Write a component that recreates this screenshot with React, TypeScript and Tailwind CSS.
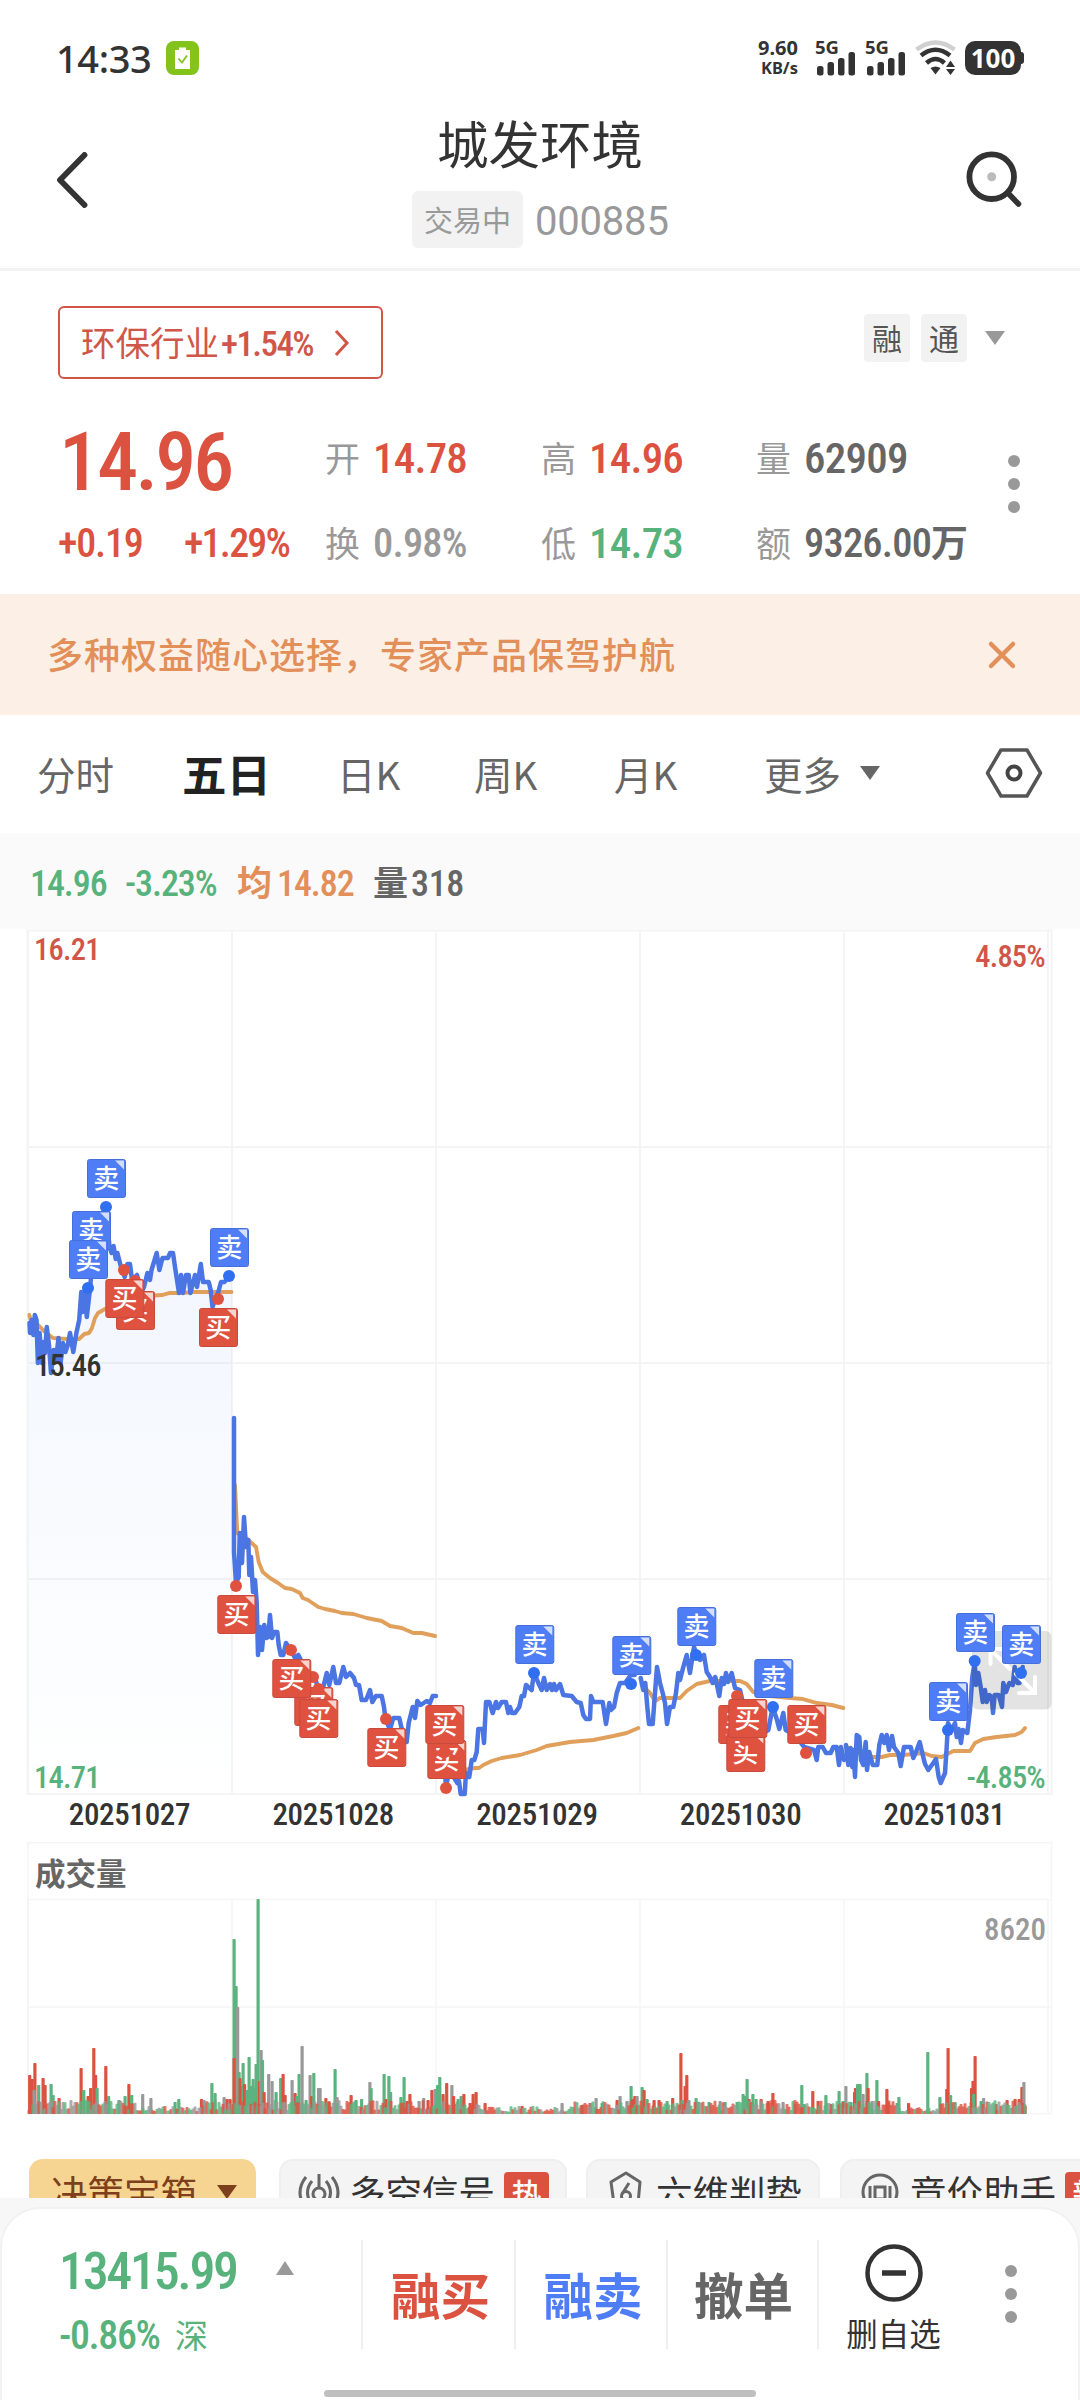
import React from 'react';
import clsx from 'clsx';

type Point = [number, number];
type Side = 'buy' | 'sell';

interface TradeMark {
  side: Side;
  box?: Point;
  dot?: Point;
}

const NUM = "font-['Roboto_Condensed','Noto_Sans_CJK_SC',sans-serif]";

// x,y pairs on the 1080 wide chart canvas, one entry per trading day
const PRICE_DAYS = [
  '29.5,1323 30,1333 31.7,1320 33.4,1335 34.8,1315 36.5,1320 37.9,1363 39.6,1333 42,1363 43.7,1342 45,1353 46.8,1327 49,1345 51,1373 53.7,1350 56,1360 58.5,1338 60.6,1363 63,1343 65.4,1352 67.8,1345 70,1333 73.3,1352 76.4,1333 79.2,1320 81.3,1292 82.6,1312 84.7,1293 86.8,1317 90.2,1287 93,1253 97,1233 102,1215 105.7,1207 109.5,1247 111.6,1253 113.6,1246 115.7,1259 117.4,1253 121,1267 124.7,1277 127.4,1264 130,1264 132,1280 137,1275 141,1293 144,1287 147.4,1273 150,1280 151.5,1270 156.7,1253 159.4,1270 162.5,1258 168,1258 170,1253 173,1253 175,1267 177,1280 179,1293 181,1275 183,1293 186,1275 188.7,1275 190.4,1293 193,1283 195,1275 197,1287 199,1275 200.8,1264 203,1282 208.7,1282 210.7,1290 212.5,1307 215,1300 218,1293 221,1282 224.5,1282 229,1276',
  '234,1418 234,1552 236,1583 238.7,1577 239.7,1533 242,1563 244,1517 246,1547 248.3,1540 249.3,1575 251,1557 253,1592 255,1580 256.7,1603 258,1655 260,1627 262,1650 264.3,1625 266.3,1638 268.3,1637 270,1615 272,1638 274,1632 277.3,1632 278.7,1645 280.7,1655 283.3,1655 286,1643 290.7,1650 295,1658 298.3,1655 306,1670 315,1677 318.3,1690 323.3,1687 326.7,1673 329.3,1685 333.3,1667 336,1683 339.3,1683 343.3,1667 346,1677 350,1673 354,1678 356,1685 359,1685 361.7,1700 366,1700 370,1690 372.3,1702 376,1696 381.7,1696 384,1707 385.3,1718 390,1730 393.3,1718 399.3,1718 401.3,1727 406.7,1742 408.7,1723 412.7,1707 415,1718 417.3,1701 420.7,1705 426.7,1701 430,1703 432.7,1696 436,1696',
  '438,1718 441,1742 444,1752 446,1788 450,1765 453,1776 457.3,1783 459,1781 460.7,1794 464.7,1794 466,1773 469.3,1777 471.7,1760 474.3,1760 476.7,1752 478.3,1729 482.7,1729 484,1743 486,1702 489.3,1702 492.7,1713 496,1702 498,1708 501.7,1702 506,1702 508.3,1713 510,1707 512,1713 515,1713 519.3,1707 521.7,1696 524,1696 526,1685 531.7,1690 534,1672 538.3,1683 541.7,1690 544,1678 546.7,1690 550,1684 552,1690 554,1684 556,1690 560,1684 563.3,1695 571.7,1696 576.7,1702 580.7,1703 583.3,1715 586,1719 590,1719 591,1696 593.3,1702 602.7,1702 606,1724 609.3,1703 611,1710 614,1707 616.7,1693 620,1683 625,1683 630.7,1675 634.7,1675',
  '640.7,1678 643.3,1690 645.3,1683 647.3,1707 649,1724 652.7,1724 655,1693 657,1667 660,1683 662.7,1693 665,1703 667,1724 670,1707 673.3,1707 676,1693 678.3,1673 680,1680 683.3,1667 686.7,1655 690,1673 692.7,1655 694,1647 696.7,1655 700,1660 704,1655 706.7,1672 710,1677 712.7,1683 715.3,1677 719.3,1696 721.7,1678 724,1684 726,1673 728,1682 731.7,1673 735,1688 740,1690 745,1712 752,1725 760,1735 768.3,1730 772.7,1707 776.7,1719 779.3,1729 783.3,1713 785.7,1730 795,1735 804,1747 814,1750 816.7,1760 818.3,1747 822.7,1747 826,1753 830.7,1753 833.3,1747 836.7,1747 839,1765 841,1747 844,1760',
  '846,1745 848.3,1765 850.7,1748 852.3,1767 853.5,1750 855,1777 856.7,1735 859.3,1737 861,1760 863.3,1765 865.7,1742 867,1770 869.3,1752 872.7,1765 877.3,1765 879.3,1745 881.7,1735 884.3,1743 886.7,1735 889,1750 892,1736 894,1747 898.3,1753 900.7,1766 904,1747 910.7,1747 913.3,1758 916,1752 919.7,1742 922,1752 925,1764 928.3,1770 933.3,1763 936,1759 938.7,1777 940.7,1783 945,1773 946.7,1747 948,1723 951,1730 955,1723 956.7,1737 958.7,1729 961,1743 962.7,1730 967.3,1733 970,1710 972.3,1677 974.7,1662 976,1685 978.3,1673 980.7,1687 982.7,1702 985,1690 986.7,1702 989.3,1695 991.7,1697 993,1713 994.7,1695 998.7,1695 1002,1707 1003.3,1683 1006,1692 1009.3,1683 1012.7,1685 1014.7,1667 1017.3,1683 1019.5,1683 1022.7,1667',
];

const AVERAGE_DAYS = [
  '29.3,1315 31,1321 38,1325 45,1332 53,1338 67,1339 79,1339 84.4,1334 89,1333 92,1328 95,1318 98,1313 105,1309 125,1300 146,1296 162,1295 169,1293 182.5,1293 193,1292 231.5,1292',
  '235,1485 237.3,1533 248.3,1540 256,1547 258.7,1562 262.7,1572 270,1578 278,1583 285,1588 291.7,1589 300,1593 302.7,1598 308,1600 318.3,1607 325,1609 335,1611 341.7,1613 353.3,1614 366.7,1618 381.7,1621 390,1626 401.7,1628 413.3,1633 421.7,1633 435,1636',
  '464,1770 475,1768 479,1768 483.3,1765 491.7,1761 501.7,1758 520,1755 536.7,1750 546.7,1746 570,1742 593.3,1740 613.3,1736 626.7,1733 638.3,1728',
  '641.7,1685 650,1693 655,1701 660,1698 680,1698 686.7,1691 696.7,1684 710,1681 740,1681 746.7,1684 753.3,1692 770,1696 790,1698 803,1699 817,1703 831.7,1705 843.3,1708',
  '846,1746 851.7,1750 873.3,1757 881.7,1757 890,1755 903.3,1755 923.3,1753 931.7,1756 941.7,1757 953.3,1751 970,1751 975,1743 983.3,1739 996.7,1737 1015,1735 1021.7,1732 1025,1728',
];

// painted in order, later entries cover earlier ones
const MARKS: TradeMark[] = [
  { side: 'sell', box: [87, 1159], dot: [106, 1207] },
  { side: 'sell', box: [72, 1211] },
  { side: 'sell', box: [69, 1240], dot: [88, 1288] },
  { side: 'buy', dot: [135, 1281] },
  { side: 'buy', box: [116, 1291] },
  { side: 'buy', box: [105.3, 1279], dot: [124, 1270] },
  { side: 'sell', box: [210, 1228], dot: [229, 1276] },
  { side: 'buy', box: [199, 1308], dot: [218, 1299] },
  { side: 'buy', box: [217.3, 1595], dot: [236, 1586] },
  { side: 'buy', box: [294.3, 1687], dot: [318.5, 1689] },
  { side: 'buy', box: [299.3, 1699], dot: [313, 1677] },
  { side: 'buy', box: [272.3, 1659], dot: [291, 1650] },
  { side: 'buy', box: [367.3, 1728], dot: [386, 1719] },
  { side: 'buy', box: [427.3, 1740], dot: [444.7, 1752] },
  { side: 'buy', box: [425.3, 1705], dot: [446, 1788] },
  { side: 'sell', box: [515.3, 1625], dot: [534, 1673] },
  { side: 'sell', box: [612.3, 1636], dot: [631, 1684] },
  { side: 'sell', box: [677.3, 1607], dot: [696, 1655] },
  { side: 'buy', box: [718.3, 1705] },
  { side: 'buy', box: [726.3, 1733], dot: [745, 1740] },
  { side: 'buy', dot: [753, 1743] },
  { side: 'buy', dot: [737, 1696] },
  { side: 'buy', box: [728.3, 1699] },
  { side: 'sell', box: [754.3, 1659], dot: [773, 1707] },
  { side: 'buy', box: [787.3, 1705], dot: [806, 1753] },
  { side: 'sell', box: [929, 1682], dot: [948, 1730] },
  { side: 'sell', box: [956, 1613], dot: [974.7, 1661] },
  { side: 'sell', box: [1002, 1625], dot: [1021, 1673] },
];

const BAR_COLORS: Record<string, string> = { r: '#dc5241', g: '#5cb37f', y: '#999999' };

// x, height, colour key
const VOLUME_PEAKS =
  '29.6 39 r,32 35 r,34.8 51 r,34 24 y,38.6 29 g,43 36 r,45 29 r,51 30 g,53 19 g,59 16 r,81 46 r,83.7 24 g,88 18 r,90.6 26 r,93.7 66 r,95.5 39 r,97 26 g,105.7 48 r,108.5 18 g,119 14 y,125 18 g,128.8 30 r,131.6 19 g,142.6 20 y,150.8 16 y,175 12 g,178.7 15 g,201.4 15 r,204 14 y,211.8 31 g,215 21 g,224 17 y,227 15 r,230 15 r,' +
  '234 175 g,236 128 g,237.6 107 y,234 56 r,239 42 g,240 36 r,241.5 28 r,243 51 g,244.5 30 r,247 24 g,249 57 g,251 28 g,253 35 g,254.5 26 g,256 50 g,258 215 g,259.5 33 r,261 64 y,262.4 54 g,264 22 r,268.6 40 y,272 33 y,276 22 g,280.6 36 g,283 40 r,285 19 r,292 34 y,295 21 r,297 18 g,299 40 g,302 68 y,306 14 g,310 39 y,311.5 18 r,313.7 41 g,318.5 26 y,320 26 y,325.8 16 r,329 12 r,335 45 g,337 17 y,351 19 r,356 14 g,361.5 15 g,369.8 32 y,371 26 g,384 40 g,386 15 r,388.8 38 g,390.5 22 g,400.8 17 g,404 37 g,407 13 r,409.8 20 r,419 13 y,423.6 16 y,428 14 r,431.8 24 r,435 25 y,' +
  '437.5 29 g,439.7 37 g,443 20 r,446.6 31 r,451.8 29 y,453.5 18 r,458 15 g,461 18 g,463.8 20 r,470 11 r,473 20 r,476 22 r,485 11 r,522 8 r,562 11 y,582 9 g,590 11 r,596 16 y,602 11 g,617 14 r,620 18 y,627 13 y,631 28 g,632.5 15 r,634.7 18 r,637 18 y,' +
  '642 27 g,644 24 r,647 15 g,654 14 r,659 14 r,667 13 g,672.6 16 r,680.8 61 r,682 14 g,685 28 r,686.7 39 r,688.5 14 g,696 16 g,698 12 y,709 12 g,720 13 y,725 12 g,737 12 g,743 20 g,745 18 g,747 35 g,749 15 r,752.8 20 g,756 15 g,761 15 r,768 13 r,772.8 21 r,783 12 y,795 10 y,801.7 29 g,804 10 g,812.7 23 r,818 13 r,825.8 19 g,831 10 r,839 23 g,' +
  '845.8 28 y,843 13 g,851 12 g,855.4 26 r,854.5 22 r,857.5 30 g,860 30 g,863 20 y,866.8 41 g,868 26 r,872 13 y,876.8 34 g,878.5 13 r,886.8 25 r,888 12 r,897 11 g,898.8 17 g,908.5 11 r,927.7 62 g,939.8 17 g,946.7 25 r,948 66 r,950.5 19 g,955 12 g,971.5 26 r,972.9 33 r,975 58 r,973.5 20 g,983.5 16 y,981 13 g,996 10 r,1007 14 r,1015 15 r,1019 15 r,1021.8 27 r,1023.8 32 y,1025 8 r';

const noise = (i: number) => {
  const s = Math.sin(i * 91.17) * 43758.5453;
  return s - Math.floor(s);
};

const BASE_BARS = Array.from({ length: 499 }, (_, i) => {
  const x = 29 + i * 2;
  const quiet = (x > 480 && x < 575) || (x > 135 && x < 200) || (x > 900 && x < 940);
  const key = noise(i + 7) < 0.4 ? 'r' : noise(i + 7) < 0.72 ? 'g' : 'y';
  return { x, h: (quiet ? 2 : 4) + noise(i) * (quiet ? 6 : 10), key };
});

const PEAK_BARS = VOLUME_PEAKS.split(',').map((entry) => {
  const [x, h, key] = entry.split(' ');
  return { x: Number(x), h: Number(h), key };
});

const DAY_LINES = [28, 232, 436, 640, 844, 1048];
const DATES = ['20251027', '20251028', '20251029', '20251030', '20251031'];

const Dots: React.FC = () => (
  <div className="flex flex-col items-center gap-[11px]">
    <span className="size-3 rounded-full bg-[#999]" />
    <span className="size-3 rounded-full bg-[#999]" />
    <span className="size-3 rounded-full bg-[#999]" />
  </div>
);

const Triangle: React.FC<{ color: string; up?: boolean }> = ({ color, up }) => (
  <svg width="20" height="14" viewBox="0 0 20 14" className="shrink-0">
    <path d={up ? 'M1 14 L10 0 L19 14 Z' : 'M0 0 L20 0 L10 14 Z'} fill={color} />
  </svg>
);

const SignalBars: React.FC = () => (
  <div className="flex h-[35px] w-[50px] flex-col items-start">
    <span className="h-[12px] text-[18.5px] leading-[12px] font-bold">5G</span>
    <svg width="40" height="24" viewBox="0 0 40 24" className="-mt-[1px] ml-[2px]">
      <g fill="#333">
        <rect x="0" y="14" width="6.5" height="9.5" rx="2.5" />
        <rect x="10.5" y="10" width="6.5" height="13.5" rx="2.5" />
        <rect x="21" y="6" width="6.5" height="17.5" rx="2.5" />
        <rect x="31.5" y="0" width="6.5" height="23.5" rx="2.5" />
      </g>
    </svg>
  </div>
);

const StatusBar: React.FC = () => (
  <div className="flex h-[116px] items-center justify-between pr-[56px] pl-[56px] font-['Noto_Sans',sans-serif] text-[#333]">
    <div className="flex items-center">
      <span className="w-[110px] text-[38px] leading-none font-medium tracking-[-0.01em]">14:33</span>
      <svg width="33" height="34" viewBox="0 0 33 34">
        <rect width="33" height="34" rx="8" fill="#84c31c" />
        <path d="M9 9h4V6.500h7V9h4v19H9z" fill="#fff" />
        <path d="M12.500 17.500l3.500 4 5-7" fill="none" stroke="#84c31c" strokeWidth="1.800" />
      </svg>
    </div>
    <div className="flex items-center">
      <div className="flex w-[58px] flex-col pr-[17px] text-right font-['Noto_Sans',sans-serif] font-bold">
        <span className="text-[20px] leading-[19px]">9.60</span>
        <span className="text-[16.5px] leading-[21px]">KB/s</span>
      </div>
      <SignalBars />
      <SignalBars />
      <svg width="42" height="36" viewBox="0 0 42 36" className="mr-[8px]">
        <g fill="none" strokeWidth="4.500">
          <path d="M1.500 9.500Q20.500-4.500 39.500 9.500" stroke="#d0d0d0" />
          <path d="M6 15.500Q20.500 4 35 15.500" stroke="#333" />
          <path d="M11.500 23Q20.500 15 29.500 23" stroke="#333" />
        </g>
        <path d="M15.500 28q5-3 10 0l-5 6.500z" fill="#333" />
        <path d="M31 27l4.500-6.500L40 27zM31 29h9l-4.500 6z" fill="#333" />
      </svg>
      <div className="flex h-[34px] w-[56px] items-center justify-center rounded-[10px] bg-[#333] text-[26px] leading-none font-bold text-white">
        100
      </div>
      <span className="h-[12px] w-[3px] rounded-r bg-[#333]" />
    </div>
  </div>
);

const Header: React.FC = () => (
  <header className="flex h-[155px] justify-between border-b-[3px] border-[#f2f2f2] pr-[56px] pl-[56px]">
    <svg width="100" height="56" viewBox="0 0 100 56" className="mt-[36px]">
      <path d="M28.500 3L4 28L28.500 53" fill="none" stroke="#333" strokeWidth="5.800" strokeLinecap="round" strokeLinejoin="round" />
    </svg>
    <div className="flex flex-col items-center">
      <h1 className="h-[56px] text-[51.5px] leading-[51px] text-[#333]">城发环境</h1>
      <div className="mt-[19px] ml-0.5 flex items-center gap-3">
        <span className="flex h-[57px] w-[111px] items-center justify-center rounded-md bg-[#f2f2f2] text-[29px] leading-none text-[#999]">
          交易中
        </span>
        <span className="w-[135px] pt-1 font-['Roboto',sans-serif] text-[40px] leading-none tracking-[-0.005em] text-[#999]">000885</span>
      </div>
    </div>
    <div className="flex w-[100px] justify-end">
      <svg width="60" height="60" viewBox="0 0 60 60" className="mt-[34px]">
        <circle cx="27.700" cy="26.700" r="22.300" fill="none" stroke="#333" strokeWidth="5.800" />
        <circle cx="27.700" cy="26.700" r="4.500" fill="#bbb" />
        <path d="M44 43L54.500 54" stroke="#333" strokeWidth="5.500" strokeLinecap="round" />
      </svg>
    </div>
  </header>
);

interface StatProps {
  label: string;
  value: string;
  unit?: string;
  tone: string;
  small?: boolean;
}

const Stat: React.FC<StatProps> = ({ label, value, unit, tone, small }) => (
  <div className="flex items-center leading-none">
    <span className="w-[48px] pb-1 text-[35px] text-[#999]">{label}</span>
    <span className={clsx(NUM, tone, 'font-medium', small ? 'text-[40.5px] tracking-[-0.02em]' : 'text-[43px] tracking-[-0.018em]')}>
      {value}
    </span>
    {unit && <span className={clsx('pb-1 text-[37px] font-bold', tone)}>{unit}</span>}
  </div>
);

const Quote: React.FC = () => (
  <section className="h-[323px] pr-[57px] pl-[58px] pt-[35px]">
    <div className="flex h-[73px] items-start justify-between">
      <div className="flex h-[73px] w-[325px] items-center rounded-md border-2 border-[#cf5648] pl-[21px] text-[#cf5648]">
        <span className="pb-0.5 text-[34.5px] leading-none">环保行业</span>
        <span className={clsx(NUM, 'w-[115px] pt-1 pl-0.5 text-[35px] leading-none font-medium tracking-[-0.045em]')}>+1.54%</span>
        <svg width="16" height="28" viewBox="0 0 16 28">
          <path d="M2 2l11 12L2 26" fill="none" stroke="currentColor" strokeWidth="3" />
        </svg>
      </div>
      <div className="mt-2 flex items-center gap-[11px] pr-[18px]">
        <span className="flex h-12 w-[46px] items-center justify-center rounded bg-[#f2f2f2] pb-0.5 text-[30px] leading-none text-[#555]">融</span>
        <span className="mr-[7px] flex h-12 w-[46px] items-center justify-center rounded bg-[#f2f2f2] pb-0.5 text-[30px] leading-none text-[#555]">通</span>
        <Triangle color="#999" />
      </div>
    </div>
    <div className="mt-[36px] flex h-[160px]">
      <div className="w-[267px] text-[#dc5241]">
        <div className={clsx(NUM, 'h-[92px] pl-px text-[82px] leading-[94px] font-medium tracking-[-0.035em]')}>14.96</div>
        <div className={clsx(NUM, 'flex h-[74px] items-center text-[40px] leading-none font-medium tracking-[-0.03em]')}>
          <span className="w-[126px]">+0.19</span>
          <span className="tracking-[-0.045em]">+1.29%</span>
        </div>
      </div>
      <div className="grid grid-cols-[216px_215px_226px] grid-rows-[86px_85px]">
        <Stat label="开" value="14.78" tone="text-[#dc5241]" />
        <Stat label="高" value="14.96" tone="text-[#dc5241]" />
        <Stat label="量" value="62909" tone="text-[#666]" />
        <Stat label="换" value="0.98%" tone="text-[#999]" small />
        <Stat label="低" value="14.73" tone="text-[#57b27c]" />
        <Stat label="额" value="9326.00" unit="万" tone="text-[#666]" small />
      </div>
      <div className="ml-[26px] pt-[40px]">
        <Dots />
      </div>
    </div>
  </section>
);

const Banner: React.FC = () => (
  <div className="flex h-[121px] items-center justify-between bg-[#fbefe6] pr-[63px] pl-[47px] text-[#e38f5a]">
    <span className="pb-[3px] text-[36px] leading-none font-medium tracking-[1px]">多种权益随心选择，专家产品保驾护航</span>
    <svg width="30" height="30" viewBox="0 0 30 30">
      <path d="M4 4l22 22M26 4L4 26" stroke="currentColor" strokeWidth="4.500" strokeLinecap="round" />
    </svg>
  </div>
);

const PeriodTabs: React.FC = () => (
  <nav className="flex h-[118px] items-center pb-0.5 pl-[37px] text-[38.5px] leading-none text-[#666]">
    <span className="w-[145px]">分时</span>
    <span className="w-[155px] text-[44.5px] font-bold text-[#222]">五日</span>
    <span className="w-[137px]">日K</span>
    <span className="w-[140px]">周K</span>
    <span className="w-[150px]">月K</span>
    <span className="w-[96px]">更多</span>
    <Triangle color="#666" />
    <svg width="58" height="52" viewBox="0 0 58 52" className="ml-[105px]">
      <path d="M16 3h26l13.500 23L42 49H16L2.500 26z" fill="none" stroke="#555" strokeWidth="3.500" strokeLinejoin="round" />
      <circle cx="29" cy="26" r="6.500" fill="none" stroke="#444" strokeWidth="4" />
    </svg>
  </nav>
);

const InfoBar: React.FC = () => (
  <div className={clsx(NUM, 'flex h-[96px] items-center bg-[#fafafa] pt-1.5 pl-[30px] text-[36px] leading-none font-medium tracking-[-0.03em]')}>
    <span className="w-[95px] text-[#57b27c]">14.96</span>
    <span className="w-[112px] text-[#57b27c]">-3.23%</span>
    <span className="w-[40px] text-[35px] font-bold text-[#e38f5a]">均</span>
    <span className="w-[96px] text-[#e38f5a]">14.82</span>
    <span className="w-[38px] text-[35px] font-bold text-[#666]">量</span>
    <span className="tracking-[-0.01em] text-[#666]">318</span>
  </div>
);

const Mark: React.FC<{ mark: TradeMark }> = ({ mark }) => {
  const buy = mark.side === 'buy';
  return (
    <g>
      {mark.box && (
        <g transform={`translate(${mark.box[0]} ${mark.box[1]})`}>
          <rect x="0.500" y="0.500" width="38" height="38" rx="2" fill={buy ? '#e05240' : '#4f7df5'} stroke={buy ? '#c84a3c' : '#456fdb'} />
          <path d="M28 1.500h9v9z" fill="#fff" opacity="0.75" />
          <text x="19.300" y="29" fontSize="26" fontWeight="500" fill="#fff" textAnchor="middle">
            {buy ? '买' : '卖'}
          </text>
        </g>
      )}
      {mark.dot && <circle cx={mark.dot[0]} cy={mark.dot[1]} r="6" fill={buy ? '#e05240' : '#2f6ff0'} />}
    </g>
  );
};

const PriceChart: React.FC = () => (
  <svg width="1080" height="913" viewBox="0 929 1080 913" className="block font-['Noto_Sans_CJK_SC',sans-serif]">
    <defs>
      <linearGradient id="area" x1="0" y1="1207" x2="0" y2="1794" gradientUnits="userSpaceOnUse">
        <stop offset="0" stopColor="#4a76e8" stopOpacity="0.080" />
        <stop offset="1" stopColor="#4a9ee8" stopOpacity="0" />
      </linearGradient>
    </defs>
    <g stroke="#f4f4f4" strokeWidth="2" fill="none">
      <rect x="27.500" y="930.500" width="1024" height="863.500" />
      {DAY_LINES.map((x) => (
        <path key={x} d={`M${x} 930V1794`} />
      ))}
      <path d="M28 1147H1051M28 1363H1051M28 1579H1051" />
    </g>
    <polygon points={`28,1794 ${PRICE_DAYS[0]} 232,1276 232,1794`} fill="url(#area)" />
    <g fill="none" stroke="#e0a05c" strokeWidth="3.900" strokeLinecap="round" strokeLinejoin="round">
      {AVERAGE_DAYS.map((points) => (
        <polyline key={points} points={points} />
      ))}
    </g>
    <g fill="none" stroke="#4a75e2" strokeWidth="4.500" strokeLinecap="round" strokeLinejoin="round">
      {PRICE_DAYS.map((points) => (
        <polyline key={points} points={points} />
      ))}
    </g>
    <rect x="972" y="1631" width="79.500" height="78.500" rx="6" fill="#000" opacity="0.110" />
    <g fill="none" stroke="#fff" strokeWidth="4" strokeLinecap="round">
      <path d="M990.500 1664V1649H1006M991 1650L1010 1669M1035 1677V1693H1019M1034 1692L1016 1674" />
    </g>
    {MARKS.map((mark, i) => (
      <Mark key={i} mark={mark} />
    ))}
    <g className={clsx(NUM, 'tracking-[-0.025em]')} fontSize="30.500" fontWeight="500">
      <text x="34" y="960" fill="#cf5648">16.21</text>
      <text x="1045" y="967" fill="#cf5648" textAnchor="end">4.85%</text>
      <text x="35" y="1376" fill="#333">15.46</text>
      <text x="34" y="1788" fill="#57b27c">14.71</text>
      <text x="1045" y="1788" fill="#57b27c" textAnchor="end">-4.85%</text>
    </g>
    <g className={clsx(NUM, 'tracking-[-0.01em]')} fontSize="31" fontWeight="500" fill="#333" textAnchor="middle">
      {DATES.map((date, i) => (
        <text key={date} x={129.500 + i * 203.700} y="1825">
          {date}
        </text>
      ))}
    </g>
  </svg>
);

const VolumeChart: React.FC = () => (
  <svg width="1080" height="317" viewBox="0 1842 1080 317" className="block font-['Noto_Sans_CJK_SC',sans-serif]">
    <g stroke="#f5f5f5" strokeWidth="1.500" fill="none">
      <rect x="28" y="1842.700" width="1023.500" height="271" />
      {DAY_LINES.map((x) => (
        <path key={x} d={`M${x} 1899V2114`} />
      ))}
      <path d="M28 1899.500H1051M28 2007H1051" />
    </g>
    <text x="35" y="1885" fontSize="30.500" fontWeight="700" fill="#666">成交量</text>
    <text className={NUM} x="1046" y="1940" fontSize="31" fontWeight="500" fill="#999" textAnchor="end">
      8620
    </text>
    {PEAK_BARS.map((bar, i) => (
      <rect key={i} x={bar.x - 1.5} y={2114 - bar.h} width="3.200" height={bar.h} rx="0.800" fill={BAR_COLORS[bar.key]} />
    ))}
    {BASE_BARS.map((bar) => (
      <rect key={bar.x} x={bar.x - 1.5} y={2114 - bar.h} width="3" height={bar.h} rx="0.800" fill={BAR_COLORS[bar.key]} opacity="0.800" />
    ))}
  </svg>
);

const Chip: React.FC<{ className: string; label: string; badge?: string; children: React.ReactNode }> = ({
  className,
  label,
  badge,
  children,
}) => (
  <div className={clsx('flex h-[72px] shrink-0 items-center rounded-[14px] border-2 border-[#efefef] bg-[#f4f4f4] pb-1.5', className)}>
    {children}
    <span className="text-[36.5px] leading-none whitespace-nowrap text-[#333]">{label}</span>
    {badge && (
      <span className="mt-1 ml-[9px] flex h-[44px] w-[45px] shrink-0 items-center justify-center rounded-sm bg-[#dc5241] pb-1 text-[30px] leading-none font-medium text-white">
        {badge}
      </span>
    )}
  </div>
);

const ToolChips: React.FC = () => (
  <div className="flex h-[39px] items-start overflow-hidden pl-[29px]">
    <div className="mr-[23px] flex h-[72px] w-[227px] shrink-0 items-center rounded-[14px] bg-[#f6d491] pb-1.5 pl-[22px] text-[36.5px] leading-none text-[#7d3f1c]">
      <span className="mr-[20px]">决策宝箱</span>
      <Triangle color="#7d3f1c" />
    </div>
    <Chip className="mr-[19px] w-[288px] pl-[17px]" label="多空信号" badge="热">
      <svg width="42" height="44" viewBox="0 0 42 44" className="mr-[9px] shrink-0" fill="none" stroke="#666" strokeWidth="3">
        <circle cx="21" cy="24" r="6" />
        <path d="M21 4v14M14 11q-9 11 0 24M28 11q9 11 0 24M8 7q-12 15 0 32M34 7q12 15 0 32" />
      </svg>
    </Chip>
    <Chip className="mr-[20px] w-[234px] pl-[21px]" label="六维判势">
      <svg width="34" height="44" viewBox="0 0 34 44" className="mr-[13px] shrink-0" fill="none" stroke="#666" strokeWidth="3" strokeLinejoin="round">
        <path d="M17 3L31 12L29 34L17 41L5 34L2 12Z" />
        <path d="M20 13L13 24" />
        <circle cx="17" cy="26" r="4.500" />
      </svg>
    </Chip>
    <Chip className="w-[300px] pl-[19px]" label="竞价助手" badge="新">
      <svg width="38" height="44" viewBox="0 0 38 44" className="mr-[11px] shrink-0" fill="none" stroke="#666" strokeWidth="3">
        <circle cx="19" cy="22" r="17" />
        <rect x="14" y="17" width="10" height="12" />
        <path d="M9 16v14M29 16v14" />
      </svg>
    </Chip>
  </div>
);

const BottomSheet: React.FC = () => (
  <div className="h-[202px] bg-[#f7f7f7] pt-[9px]">
    <div className="flex h-[193px] flex-col rounded-t-[40px] border-2 border-b-0 border-[#f2f2f2] bg-white">
      <div className="mt-[31px] flex h-[109px]">
        <div className="flex w-[299px] flex-col pl-[57px] text-[#57b27c]">
          <div className="flex h-[64px] shrink-0 items-center justify-between">
            <span className={clsx(NUM, 'text-[52px] leading-none font-medium tracking-[-0.045em]')}>13415.99</span>
            <span className="mr-[6px] -mt-2">
              <Triangle color="#999" up />
            </span>
          </div>
          <div className="flex h-[64px] shrink-0 items-center leading-none">
            <span className={clsx(NUM, 'w-[116px] text-[40px] font-medium tracking-[-0.035em]')}>-0.86%</span>
            <span className="pb-1 text-[33px]">深</span>
          </div>
        </div>
        <div className="ml-[60px] flex h-[109px] text-[49.5px] leading-none font-bold">
          <span className="flex w-[153px] items-center justify-center border-l-2 border-[#efefef] pb-0.5 pl-1 text-[#dc5241]">融买</span>
          <span className="flex w-[152px] items-center justify-center border-l-2 border-[#efefef] pb-0.5 pl-1 text-[#4f7df5]">融卖</span>
          <span className="flex w-[153px] items-center justify-center border-x-2 border-[#efefef] pb-0.5 pl-0.5 text-[#666]">撤单</span>
        </div>
        <div className="flex w-[149px] flex-col items-center pt-[3px]">
          <svg width="60" height="60" viewBox="0 0 60 60" fill="none" stroke="#333">
            <circle cx="30" cy="30" r="26.500" strokeWidth="4.500" />
            <path d="M18 30h24" strokeWidth="5.500" />
          </svg>
          <span className="mt-[14px] text-[31.500px] leading-none text-[#333]">删自选</span>
        </div>
        <div className="ml-[37px] pt-[25px]">
          <Dots />
        </div>
      </div>
      <div className="mt-[41px] h-[7px] w-[432px] self-center rounded-full bg-[#bfbfbf]" />
    </div>
  </div>
);

const App: React.FC = () => (
  <div className="flex h-[2400px] w-[1080px] flex-col overflow-hidden bg-white font-['Noto_Sans_CJK_SC',sans-serif]">
    <StatusBar />
    <Header />
    <Quote />
    <Banner />
    <PeriodTabs />
    <InfoBar />
    <PriceChart />
    <VolumeChart />
    <ToolChips />
    <BottomSheet />
  </div>
);

export default App;
